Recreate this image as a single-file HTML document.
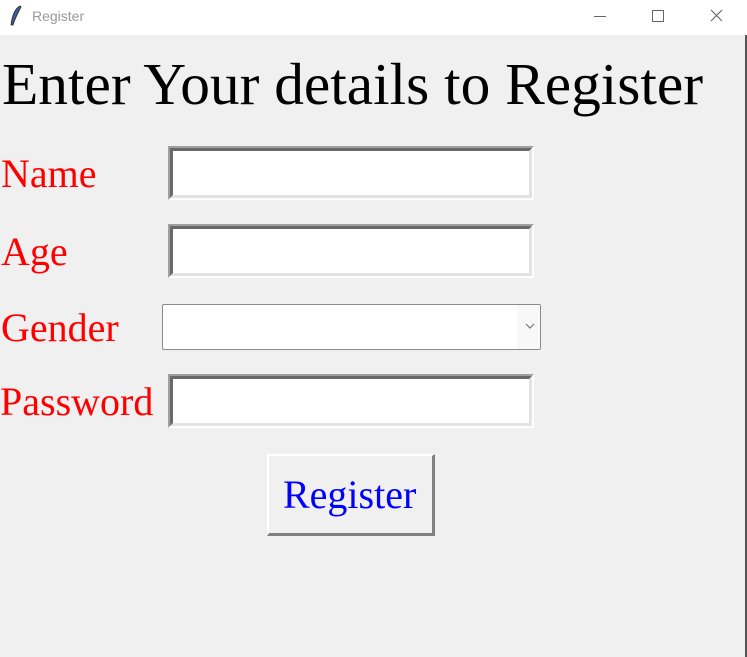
<!DOCTYPE html>
<html><head><style>
body{margin:0;width:747px;height:657px;background:#f0f0f0;position:relative;overflow:hidden;font-family:"Liberation Serif",serif}
.tb{position:absolute;left:0;top:0;width:747px;height:35px;background:#fff;font-family:"Liberation Sans",sans-serif}
.t{position:absolute;white-space:nowrap;line-height:1}
.lab{color:#f00;font-size:40px}
.e{position:absolute;left:168px;width:366px;height:54px;box-sizing:border-box;border-style:solid;border-width:2px;border-color:#a0a0a0 #fff #fff #a0a0a0;}
.e div{position:absolute;inset:0;border-style:solid;border-width:3px;border-color:#696969 #e3e3e3 #e3e3e3 #696969;background:#fff}
</style></head><body>
<div class="tb">
<svg style="position:absolute;left:9px;top:5px" width="14" height="22" viewBox="0 0 14 22"><path d="M11 1 C5 4 3 12 2 20 L4 20 C6 13 9 8 12 2Z" fill="#3a5e9a" stroke="#222" stroke-width="0.8"/></svg>
<div class="t" style="left:32px;top:9px;font-size:14px;color:#999">Register</div>
<div style="position:absolute;left:594px;top:16px;width:12px;height:1px;background:#666"></div>
<div style="position:absolute;left:652px;top:10px;width:10px;height:10px;border:1px solid #666"></div>
<svg style="position:absolute;left:710px;top:9px" width="13" height="13"><path d="M1 1L12 12M12 1L1 12" stroke="#666" stroke-width="1.1"/></svg>
</div>
<div style="position:absolute;right:0;top:35px;width:2px;height:622px;background:#555"></div>
<div class="t" style="left:2px;top:55px;font-size:59.4px">Enter Your details to Register</div>
<div class="t lab" style="left:1px;top:154px">Name</div>
<div class="t lab" style="left:1px;top:232px">Age</div>
<div class="t lab" style="left:1px;top:308px">Gender</div>
<div class="t lab" style="left:0px;top:382px">Password</div>
<div class="e" style="top:146px"><div></div></div>
<div class="e" style="top:224px"><div></div></div>
<div class="e" style="top:374px"><div></div></div>
<div style="position:absolute;left:162px;top:304px;width:379px;height:46px;box-sizing:border-box;border:1px solid #8a8a8a;border-radius:2px;background:#fff">
<div style="position:absolute;right:0;top:0;width:23px;height:44px;background:#f8f8f8"></div>
<svg style="position:absolute;right:5px;top:18px" width="10" height="7"><path d="M1 1L5 5L9 1" stroke="#777" fill="none" stroke-width="1.2"/></svg>
</div>
<div style="position:absolute;left:267px;top:454px;width:168px;height:82px;box-sizing:border-box;border-style:solid;border-width:2px 3px 3px 2px;border-color:#fff #808080 #808080 #fff;background:#f0f0f0"></div>
<div class="t" style="left:283px;top:475px;font-size:40px;color:#00f">Register</div>
</body></html>
